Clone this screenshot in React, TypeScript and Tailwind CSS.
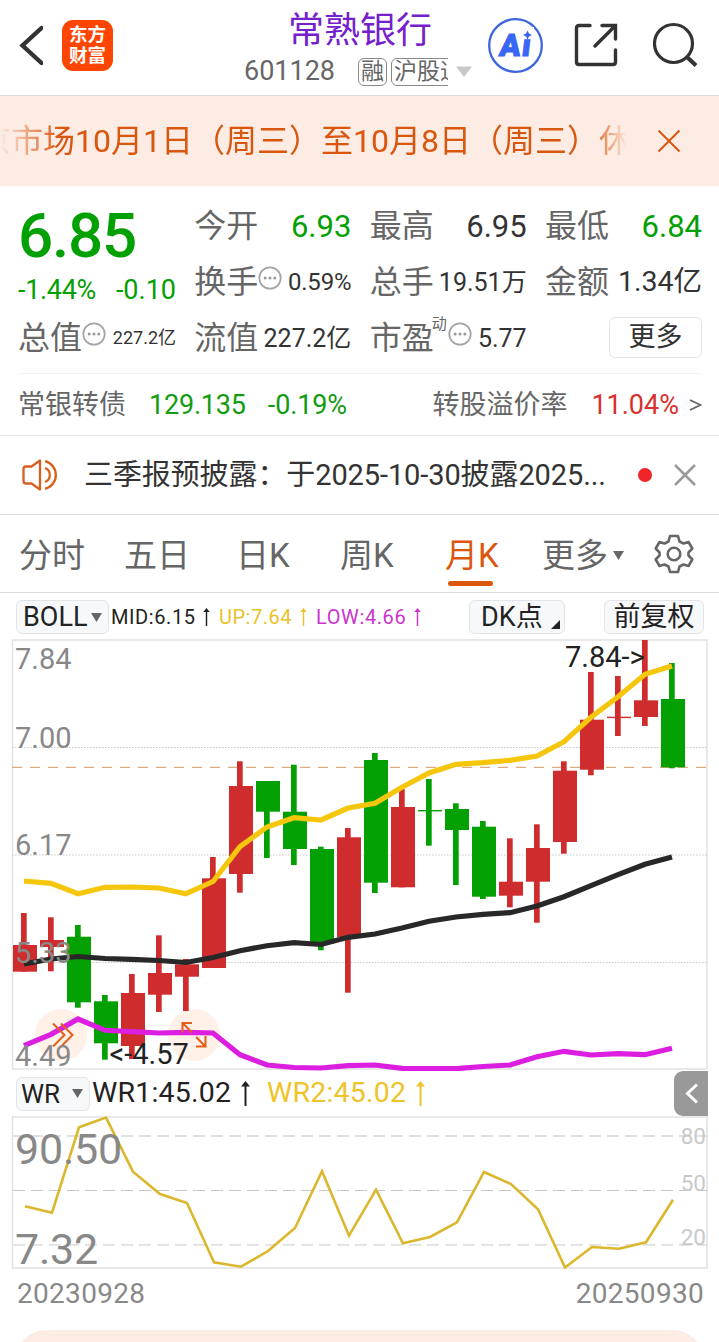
import type { ReactNode } from 'react';

type Candle = {
  up: boolean;
  high: number;
  top: number;
  bottom: number;
  low: number;
};

const RED = '#cf2d2d';
const GREEN = '#02a002';
const STEP = 27;

const c = (up: boolean, high: number, top: number, bottom: number, low: number): Candle => ({ up, high, top, bottom, low });

const candles: Candle[] = [
  c(true, 913, 945, 971.7, 971.7),
  c(true, 917.3, 940, 947, 971.3),
  c(false, 925, 936.7, 1002.3, 1007.7),
  c(false, 995, 1001.3, 1043.3, 1059.7),
  c(true, 974, 993, 1046, 1059),
  c(true, 935.3, 973, 994.7, 1012),
  c(true, 959, 964.3, 976.7, 1011),
  c(true, 857, 878.3, 968, 968),
  c(true, 761.3, 786, 874, 892.7),
  c(false, 781, 781, 811.7, 858),
  c(false, 764.7, 811.7, 849, 865),
  c(false, 846.7, 849, 944, 950.3),
  c(true, 828, 837.3, 937, 992.7),
  c(false, 753, 760, 882.7, 893),
  c(true, 789, 807, 887.3, 887.3),
  c(false, 779, 810, 811.4, 845.7),
  c(false, 803.3, 809, 830, 885),
  c(false, 821, 826.7, 896.7, 899),
  c(true, 838.3, 881.7, 895.7, 907.3),
  c(true, 824.3, 848, 881.7, 922.7),
  c(true, 761.3, 770.7, 842, 853.7),
  c(true, 672, 719.7, 769.7, 775.3),
  c(true, 676, 716.7, 718.1, 736),
  c(true, 640, 700.3, 717, 726),
  c(false, 663, 699, 767.3, 768.3),
];

const upper = [
  881, 883.3, 893.7, 887.3, 887, 888, 893.7, 881.5, 846.7, 827, 817.7, 820, 808, 803.3, 787.3, 773, 764.3, 762.7, 760.3,
  756, 741.7, 717.3, 696.7, 674.3, 666,
];
const mid = [
  964, 959, 956.5, 958.5, 959.3, 960.5, 962.5, 957.5, 950.7, 945.7, 942.7, 944.5, 937.3, 934, 928, 921.3, 917, 914.3,
  912.7, 906, 896.7, 885.7, 874.7, 864.3, 857,
];
const lower = [
  1045.7, 1034.3, 1019, 1030.3, 1031.7, 1033, 1032.3, 1033, 1054.7, 1065, 1067.5, 1068, 1065.7, 1065, 1068.3, 1068.5,
  1068.7, 1066.5, 1065, 1056.7, 1051.3, 1055, 1053.7, 1054.7, 1048.3,
];
const wr = [
  1206.3, 1212.7, 1127.3, 1117.6, 1171.7, 1194, 1203, 1262.3, 1266.7, 1251, 1228, 1171.3, 1235.7, 1189.7, 1243.3, 1237,
  1222.3, 1172, 1184, 1209.3, 1267.5, 1247, 1248.7, 1242.3, 1199.7,
];

const toPoints = (values: number[], start: number) => values.map((y, i) => `${start + i * STEP},${y}`).join(' ');

function Dots({ className = '' }: { className?: string }) {
  return (
    <svg className={`h-6 w-6 shrink-0 ${className}`} viewBox="0 0 24 24">
      <circle cx="12" cy="12" r="10.7" fill="none" stroke="#a3a3a3" strokeWidth="1.7" />
      <circle cx="7.2" cy="12" r="1.5" fill="#999" />
      <circle cx="12" cy="12" r="1.5" fill="#999" />
      <circle cx="16.8" cy="12" r="1.5" fill="#999" />
    </svg>
  );
}

function Cell({ label, children }: { label: ReactNode; children: ReactNode }) {
  return (
    <div className="flex h-14 items-center justify-between whitespace-nowrap">
      <span className="flex items-center text-[32px] text-[#666]">{label}</span>
      {children}
    </div>
  );
}

function UpArrow({ className = '' }: { className?: string }) {
  return (
    <svg className={`shrink-0 ${className}`} viewBox="0 0 9 25" fill="currentColor">
      <path d="M4.5 0 9 5.5H5.5V25h-2V5.5H0z" />
    </svg>
  );
}

function Header() {
  return (
    <header className="flex h-24 border-b-[1.5px] border-[#d9dadc]">
      <div className="flex w-[244px] items-start pl-[19px] pt-5">
        <svg className="mt-[5px] h-[42px] w-6" viewBox="0 0 24 42" fill="none" stroke="#333" strokeWidth="4.400">
          <path d="M22.500 3 3.500 20.500 22.500 38" strokeLinecap="round" />
        </svg>
        <div className="ml-[19px] flex h-[51px] w-[51px] flex-col items-center justify-center rounded-[11px] bg-[#ff4500] text-[18.5px] font-bold leading-[21px] text-white">
          <span>东方</span>
          <span>财富</span>
        </div>
      </div>
      <div className="w-[232px]">
        <h1 className="ml-11 mt-[10px] h-[42px] text-[36px] leading-[42px] text-[#7420cc]">常熟银行</h1>
        <div className="mt-[5px] flex h-[29px] items-center text-[27px] text-[#666]">
          <span className="w-[114px]">601128</span>
          <div className="flex h-7 w-[90px] gap-1 overflow-hidden text-[23px] leading-[25px]">
            <span className="h-7 shrink-0 rounded-md border-[1.5px] border-[#888] px-[2px]">融</span>
            <span className="h-7 shrink-0 rounded-md border-[1.5px] border-[#888] px-[2px]">沪股通</span>
          </div>
          <svg className="ml-2 h-3 w-4" viewBox="0 0 16 12" fill="#c8c8c8">
            <path d="M0 0.500h16L8 11z" />
          </svg>
        </div>
      </div>
      <svg className="ml-3 mt-[17px] h-14 w-14" viewBox="0 0 56 56">
        <circle cx="27.500" cy="28.500" r="26.300" fill="none" stroke="#3e66dd" strokeWidth="2.300" />
        <text
          transform="translate(10.500 38.500) skewX(-7)"
          fontFamily="Roboto"
          fontSize="31"
          fontWeight="900"
          fill="#3866f5"
          stroke="#3866f5"
          strokeWidth="1"
        >
          A<tspan dx="1.500">i</tspan>
        </text>
        <rect x="32" y="10" width="14" height="11.500" fill="#fff" />
        <path d="M39.500 13.500 41 16.500 44 18 41 19.500 39.500 22.500 38 19.500 35 18 38 16.500z" fill="#3866f5" />
      </svg>
      <svg className="ml-[29px] mt-[22px] h-[46px] w-[46px]" viewBox="0 0 46 46" fill="none" stroke="#333" strokeWidth="3.400">
        <path d="M17 3.500H6Q3.500 3.500 3.500 6V40Q3.500 42.500 6 42.500H40Q42.500 42.500 42.500 40V28" strokeLinecap="round" />
        <path d="M29 3.500H42.500V17M42 4 22 24" strokeLinecap="round" />
      </svg>
      <svg className="ml-[34px] mt-[22px] h-[46px] w-[46px]" viewBox="0 0 46 46" fill="none" stroke="#333" strokeWidth="3.200">
        <circle cx="20.500" cy="21.500" r="19" />
        <path d="M34 35 43 43.500" strokeWidth="4" />
      </svg>
    </header>
  );
}

function Notice() {
  return (
    <div className="flex h-[90px] items-center bg-[#fcece3] text-[#d9560f]">
      <div className="w-[627px] overflow-hidden whitespace-nowrap [mask-image:linear-gradient(to_right,transparent,black_60px,black_590px,transparent)]">
        <span className="-ml-[21px] text-[32px]">京市场10月1日（周三）至10月8日（周三）休市</span>
      </div>
      <svg className="ml-[30px] h-6 w-6" viewBox="0 0 24 24" stroke="currentColor" strokeWidth="2">
        <path d="M1.500 1.500 22.500 22.500M22.500 1.500 1.500 22.500" />
      </svg>
    </div>
  );
}

function Quote() {
  return (
    <section className="h-[250px] border-b-[1.5px] border-[#e8e8e8] pl-[18px] pr-[17px] pt-3">
      <div className="grid h-[175px] auto-rows-[56px] grid-cols-[158px_157px_157px_157px] content-start justify-between leading-none">
        <div className="row-span-2 h-28 text-[#02a002]">
          <div className="h-[74px] pt-px text-[62px] font-medium leading-[74px] tracking-[-1.2px]">6.85</div>
          <div className="flex h-9 items-center justify-between text-[27px]">
            <span className="tracking-[-0.3px]">-1.44%</span>
            <span>-0.10</span>
          </div>
        </div>
        <Cell label="今开">
          <span className="text-[31px] text-[#02a002]">6.93</span>
        </Cell>
        <Cell label="最高">
          <span className="text-[31px] text-[#333]">6.95</span>
        </Cell>
        <Cell label="最低">
          <span className="text-[31px] text-[#02a002]">6.84</span>
        </Cell>
        <Cell label={<>换手<Dots className="mb-2" /></>}>
          <span className="text-[24px] tracking-[-0.2px] text-[#333]">0.59%</span>
        </Cell>
        <Cell label="总手">
          <span className="text-[25px] text-[#333]">19.51万</span>
        </Cell>
        <Cell label="金额">
          <span className="text-[28.5px] text-[#333]">1.34亿</span>
        </Cell>
        <Cell label={<>总值<Dots className="mb-2" /></>}>
          <span className="text-[18px] text-[#333]">227.2亿</span>
        </Cell>
        <Cell label="流值">
          <span className="text-[25px] text-[#333]">227.2亿</span>
        </Cell>
        <Cell
          label={
            <>
              市盈
              <span className="mb-7 -ml-[2px] mr-px text-[15px]">动</span>
              <Dots className="mb-2" />
            </>
          }
        >
          <span className="text-[25px] text-[#333]">5.77</span>
        </Cell>
        <div className="flex h-14 items-center justify-end pb-[2px]">
          <button className="h-[41px] w-[93px] rounded-md border-[1.5px] border-[#e3e4e6] text-[27px] leading-none text-[#333]">更多</button>
        </div>
      </div>
      <div className="flex h-[62px] items-center border-t-[1.5px] border-[#f2f2f2] pt-px text-[27px] text-[#666]">
        <span>常银转债</span>
        <span className="ml-[23px] tracking-[-0.2px] text-[#119c11]">129.135</span>
        <span className="ml-[22px] tracking-[-0.1px] text-[#119c11]">-0.19%</span>
        <span className="ml-auto">转股溢价率</span>
        <span className="ml-6 text-[#d92f2f]">11.04%</span>
        <svg className="ml-[10px] h-3 w-[13px]" viewBox="0 0 13 12" fill="none" stroke="#666" strokeWidth="1.800">
          <path d="M1 1 11.500 6 1 11" />
        </svg>
      </div>
    </section>
  );
}

function News() {
  return (
    <section className="flex h-[79px] items-center border-b-[1.5px] border-[#d9dadc] pl-[22px]">
      <svg className="h-8 w-[39px]" viewBox="0 0 39 32" fill="none" stroke="#d9601c" strokeWidth="2.300">
        <path d="M18 1.500V30.500L9.500 24.500H4Q1.500 24.500 1.500 22V10Q1.500 7.500 4 7.500H9.500z" strokeLinejoin="round" />
        <path d="M23 9A7.500 7.500 0 0 1 23 23M23 2.200A14.200 14.200 0 0 1 23 29.800" />
      </svg>
      <span className="ml-[23px] w-[540px] whitespace-nowrap pt-[2px] text-[29px] tracking-[-0.1px] text-[#333]">
        三季报预披露：于2025-10-30披露2025...
      </span>
      <span className="ml-[14px] h-[14px] w-[14px] rounded-full bg-[#f02525]" />
      <svg className="ml-[22px] h-[22px] w-[22px]" viewBox="0 0 22 22" stroke="#999" strokeWidth="2.500">
        <path d="M1 1 21 21M21 1 1 21" />
      </svg>
    </section>
  );
}

function Tabs() {
  return (
    <nav className="flex h-[78px] items-center border-b-[1.5px] border-[#d9dadc] pl-[19px] pt-1 text-[33px] leading-none text-[#666]">
      <span className="w-[105px]">分时</span>
      <span className="w-[112px]">五日</span>
      <span className="w-[104px]">日K</span>
      <span className="w-[105px]">周K</span>
      <span className="relative w-[97px] text-[#dd560d]">
        月K
        <i className="absolute -bottom-[14px] left-[3px] h-[5px] w-[45px] rounded-full bg-[#dd560d]" />
      </span>
      <span>更多</span>
      <svg className="ml-[5px] h-[9px] w-[11px]" viewBox="0 0 11 9" fill="#666">
        <path d="M0 0h11L5.500 9z" />
      </svg>
      <svg className="mb-[3px] ml-[30px] h-10 w-10" viewBox="0 0 40 40" fill="none" stroke="#666" strokeWidth="2.600" strokeLinejoin="round">
        <path d="M16 2H24L25.500 7.500 29.500 9.500 34.500 8 38.300 14.500 34.500 18.500V21.500L38.300 25.500 34.500 32 29.500 30.500 25.500 32.500 24 38H16L14.500 32.500 10.500 30.500 5.500 32 1.700 25.500 5.500 21.500V18.500L1.700 14.500 5.500 8 10.500 9.500 14.500 7.500z" />
        <circle cx="20" cy="20" r="6.300" />
      </svg>
    </nav>
  );
}

function Indicators() {
  return (
    <div className="flex h-[45px] items-center whitespace-nowrap pl-4 pt-[3px] text-[20px] leading-none">
      <div className="flex h-[34px] w-[93px] items-center justify-between rounded-md border-[1.5px] border-[#e2e4e8] bg-[#f7f8fa] pl-[6px] pr-[6px] text-[27px] text-[#222]">
        BOLL
        <svg className="h-[9px] w-[11px] shrink-0" viewBox="0 0 11 9" fill="#666">
          <path d="M0 0h11L5.500 9z" />
        </svg>
      </div>
      <span className="ml-[2px] w-[92px] tracking-[0.6px] text-[#222]">MID:6.15</span>
      <UpArrow className="h-[18px] w-[7px] text-[#222]" />
      <span className="ml-[9px] w-[81px] tracking-[0.5px] text-[#e8c22c]">UP:7.64</span>
      <UpArrow className="h-[18px] w-[7px] text-[#e8c22c]" />
      <span className="ml-[9px] w-[98px] tracking-[0.6px] text-[#cb35cb]">LOW:4.66</span>
      <UpArrow className="h-[18px] w-[7px] text-[#cb35cb]" />
      <div className="relative ml-[48px] flex h-[34px] w-[96px] items-center rounded-md border-[1.5px] border-[#e2e4e8] bg-[#f7f8fa] pl-[11px] pt-px text-[27px] text-[#222]">
        DK点
        <svg className="absolute bottom-1 right-[4px] h-[9px] w-[9px]" viewBox="0 0 9 9" fill="#222">
          <path d="M9 0V9H0z" />
        </svg>
      </div>
      <div className="ml-[39px] flex h-[34px] w-[100px] items-center justify-center rounded-md border-[1.5px] border-[#e2e4e8] bg-[#f7f8fa] pt-px text-[27px] text-[#222]">
        前复权
      </div>
    </div>
  );
}

function KLineChart() {
  return (
    <svg className="block h-[433px] w-full" viewBox="0 638 719 433" fontFamily="Roboto" fontSize="29">
      <rect x="12.500" y="640" width="694.500" height="429" fill="none" stroke="#e1e1e1" strokeWidth="1.500" />
      {[747.5, 855, 962.5].map((y) => (
        <path key={y} d={`M12 ${y}H707`} stroke="#c8c8c8" strokeDasharray="1.500 1.500" />
      ))}
      <path d="M12 767.300H707" stroke="#dcab80" strokeWidth="1.300" strokeDasharray="10 8" />
      <circle cx="61" cy="1035" r="26" fill="#fff0e8" />
      <circle cx="194" cy="1035" r="26" fill="#fff0e8" />
      {candles.map((k, i) => (
        <g key={i} fill={k.up ? RED : GREEN}>
          <rect x={21 + i * STEP} y={k.high} width="5.700" height={k.low - k.high} />
          <rect x={13 + i * STEP} y={k.top} width="24" height={k.bottom - k.top} />
        </g>
      ))}
      <g fill="none" strokeWidth="5.200">
        <polyline points={toPoints(upper, 24)} stroke="#f5c60c" />
        <polyline points={toPoints(mid, 24)} stroke="#282828" />
        <polyline points={toPoints(lower, 24)} stroke="#dc1ee0" />
      </g>
      <g fill="none" stroke="#e0601a" strokeWidth="2">
        <path d="M53 1023.500 64.500 1035 53 1046.500M61 1023.500 72.500 1035 61 1046.500" />
        <path d="M192 1023H182.500V1032.500M183 1023.500 192 1032.500M196 1046.500H205.500V1036M205 1046 196 1037" />
      </g>
      <g fill="#888">
        <text x="15" y="669">7.84</text>
        <text x="15" y="748">7.00</text>
        <text x="15" y="855">6.17</text>
        <text x="15" y="963">5.33</text>
        <text x="15" y="1066">4.49</text>
      </g>
      <text x="565" y="667" fill="#222">7.84-&gt;</text>
      <text x="109.500" y="1064" fill="#222">&lt;-4.57</text>
    </svg>
  );
}

function WrBar() {
  return (
    <div className="flex h-[45px] items-center whitespace-nowrap pl-4 text-[28.5px] leading-none">
      <div className="flex h-[34px] w-[74px] items-center justify-between rounded-md border-[1.5px] border-[#e2e4e8] bg-[#f7f8fa] pl-1 pr-[6px] text-[26px] text-[#222]">
        WR
        <svg className="h-[9px] w-[11px] shrink-0" viewBox="0 0 11 9" fill="#666">
          <path d="M0 0h11L5.500 9z" />
        </svg>
      </div>
      <span className="ml-[2px] w-[149px] tracking-[0.2px] text-[#222]">WR1:45.02</span>
      <UpArrow className="h-[25px] w-[9px] text-[#222]" />
      <span className="ml-[17px] w-[149px] tracking-[0.2px] text-[#efc32a]">WR2:45.02</span>
      <UpArrow className="h-[25px] w-[9px] text-[#efc32a]" />
      <button className="ml-auto mr-[11px] flex h-[45px] w-[34px] items-center justify-center rounded-l-[9px] bg-[#999]">
        <svg className="h-[21px] w-[13px]" viewBox="0 0 13 21" fill="none" stroke="#fff" strokeWidth="3">
          <path d="M12 1.500 2.500 10.500 12 19.500" />
        </svg>
      </button>
    </div>
  );
}

function WrChart() {
  return (
    <svg className="block h-[153px] w-full" viewBox="0 1116 719 153" fontFamily="Roboto">
      <rect x="12.500" y="1117" width="694.500" height="151" fill="none" stroke="#e1e1e1" strokeWidth="1.500" />
      <path d="M13 1136H707M13 1244.800H707" stroke="#e0e0e0" strokeWidth="1.800" strokeDasharray="12 6" />
      <path d="M13 1190.500H707" stroke="#c8c8c8" strokeDasharray="12 6" />
      <g fill="#c9c9c9" fontSize="22.500" textAnchor="end">
        <text x="706" y="1144">80</text>
        <text x="706" y="1191">50</text>
        <text x="706" y="1245">20</text>
      </g>
      <polyline points={toPoints(wr, 25)} fill="none" stroke="#dcb62c" strokeWidth="2.600" />
      <g fill="#888" fontSize="43" letterSpacing="-0.200">
        <text x="15" y="1164">90.50</text>
        <text x="15" y="1264">7.32</text>
      </g>
    </svg>
  );
}

export default function App() {
  return (
    <div className="h-[1342px] w-[719px] overflow-hidden bg-white font-['Roboto','Noto_Sans_CJK_SC',sans-serif]">
      <Header />
      <Notice />
      <Quote />
      <News />
      <Tabs />
      <Indicators />
      <KLineChart />
      <WrBar />
      <WrChart />
      <div className="flex h-[61px] justify-between pl-[17px] pr-[15px] pt-1 text-[28px] tracking-[0.3px] text-[#888]">
        <span>20230928</span>
        <span>20250930</span>
      </div>
      <div className="mx-4 h-[60px] rounded-t-[30px] bg-[#fcece3]" />
    </div>
  );
}
